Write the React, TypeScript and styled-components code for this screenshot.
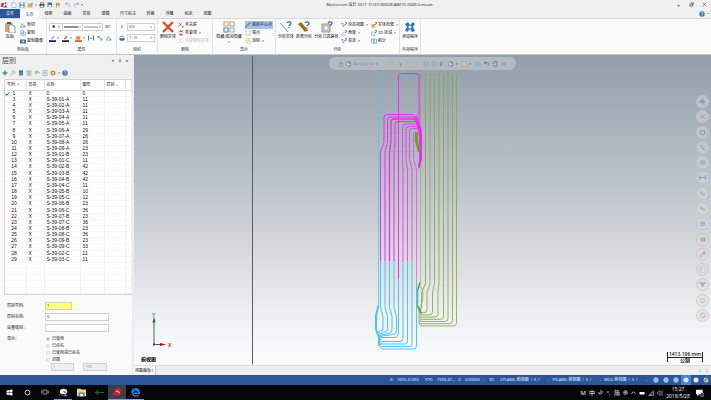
import React from "react";
import styled, { createGlobalStyle, css } from "styled-components";

const Global = createGlobalStyle`
  *, *::before, *::after { box-sizing: border-box; }
  html, body, #root { height: 100%; margin: 0; }
  body { background: #f0f0f0; overflow: hidden; }
  button, input, select { font: inherit; color: inherit; margin: 0; padding: 0; border: 0; background: none; }
`;

const Shell = styled.div`
  height: 100vh;
  display: flex;
  flex-direction: column;
  font-family: "Open Sans", "Noto Sans CJK SC", sans-serif;
  font-size: 4px;
  line-height: 6px;
  color: #111;
  white-space: nowrap;
`;

/* ---------- title bar and tabs ---------- */
const TitleBar = styled.header`
  display: grid;
  grid-template-columns: 1fr auto 1fr;
  align-items: center;
  height: 9px;
  padding-right: 4px;
`;
const QuickBar = styled.div`
  display: flex;
  align-items: center;
  gap: 2px;
  padding-left: 1px;
`;
const Title = styled.h1`
  margin: 0 0 0 52px;
  font-size: 4px;
  line-height: 8px;
  font-weight: 400;
  color: #222;
`;
const WindowButtons = styled.div`
  display: flex;
  justify-content: flex-end;
  gap: 8px;
`;
const IconButton = styled.button`
  display: flex;
  align-items: center;
  justify-content: center;
  flex: none;
`;
const Tabs = styled.nav`
  display: flex;
  align-items: stretch;
  height: 10px;
  padding-right: 1px;
  border-bottom: 1px solid #dadada;
`;
const Tab = styled.button<{ $kind?: "file" | "active" }>`
  min-width: 19px;
  padding: 0 5px;
  line-height: 9px;
  ${(p) => p.$kind === "file" && css`background: #2b579a; color: #fff; width: 20px;`}
  ${(p) => p.$kind === "active" && css`background: #fbfbfb; color: #2b579a; margin-bottom: -1px;`}
`;
const TabsEnd = styled.div`
  margin-left: auto;
  display: flex;
  align-items: center;
  gap: 2px;
`;

/* ---------- ribbon ---------- */
const Ribbon = styled.section`
  display: flex;
  height: 36px;
  background: #fbfbfb;
  border-bottom: 1px solid #c6c8ca;
  flex: none;
`;
const Group = styled.div<{ $w: number }>`
  width: ${(p) => p.$w}px;
  display: flex;
  flex-direction: column;
  border-right: 1px solid #e2e2e2;
`;
const GroupBody = styled.div`
  display: flex;
  flex: 1;
  min-height: 0;
  padding: 2px 0 0 2px;
  gap: 2px;
`;
const GroupLabel = styled.div`
  height: 8px;
  display: flex;
  align-items: center;
  justify-content: center;
  color: #333;
`;
const BigButton = styled.button<{ $w?: number }>`
  width: ${(p) => p.$w ?? 16}px;
  height: 25px;
  display: flex;
  flex-direction: column;
  align-items: center;
  flex: none;
  gap: 1px;
`;
const Column = styled.div`
  display: flex;
  flex-direction: column;
`;
const SmallButton = styled.button<{ $on?: boolean; $off?: boolean }>`
  display: flex;
  align-items: center;
  gap: 1px;
  height: 8px;
  padding: 0 1px 0 0;
  ${(p) => p.$on && css`background: #a9c4e6;`}
  ${(p) => p.$off && css`color: #bbb;`}
`;
const Line = styled.div<{ $gap?: number }>`
  display: flex;
  align-items: center;
  height: 8px;
  margin-top: 2px;
  gap: ${(p) => p.$gap ?? 2}px;
  & + & { margin-top: 3px; }
`;
const Combo = styled.div`
  display: flex;
  align-items: center;
  height: 8px;
  border: 1px solid #d0d0d0;
  background: #fff;
`;
const Cell = styled.button<{ $w: number }>`
  width: ${(p) => p.$w}px;
  height: 6px;
  display: flex;
  align-items: center;
  justify-content: space-evenly;
  & + & { border-left: 1px solid #d0d0d0; }
`;
const Letter = styled.span`
  width: 6px;
  text-align: center;
`;
const SelectBox = styled.label`
  display: flex;
  align-items: center;
  width: 28px;
  height: 8px;
  padding-right: 2px;
  border: 1px solid #d0d0d0;
  background: #fff;
  select { appearance: none; flex: 1; min-width: 0; padding-left: 1px; height: 6px; outline: 0; }
`;
const Caret = () => (
  <svg width="2" height="2" viewBox="0 0 4 4"><path d="M0 1h4L2 3.5z" fill="#555" /></svg>
);

/* ---------- workspace ---------- */
const Work = styled.main`
  flex: 1;
  min-height: 0;
  display: flex;
`;
const Side = styled.aside`
  width: 134px;
  flex: none;
  display: flex;
  flex-direction: column;
  background: #fafafa;
  border-right: 2px solid #ececec;
`;
const SideHead = styled.div`
  display: flex;
  align-items: center;
  height: 12px;
  padding: 0 3px 0 2px;
  background: #f0f0f0;
  h2 { margin: 0 auto 0 0; font-size: 7px; line-height: 12px; font-weight: 400; color: #444; }
  button { margin-left: 3px; }
`;
const SideTools = styled.div`
  display: flex;
  align-items: center;
  gap: 2px;
  height: 12px;
  padding-left: 2px;
  background: #f0f0f0;
`;
const TableBox = styled.div`
  flex: 1;
  min-height: 0;
  margin-left: 4px;
  border: 1px solid #d5d5d5;
  border-width: 1px 0 1px 1px;
  background: #fff;
`;
const LevelTable = styled.table`
  width: 100%;
  height: 100%;
  border-collapse: collapse;
  table-layout: fixed;
  font-family: "Liberation Sans", "Noto Sans CJK SC", sans-serif;
  font-size: 5px;
  line-height: 5px;
  th, td { padding: 0 0 0 2px; text-align: left; border-right: 1px solid #f0f0f0; overflow: hidden; }
  th { height: 10px; font-size: 4px; font-weight: 400; border-bottom: 1px solid #ddd; border-right-color: #e2e2e2; }
  td { border-bottom: 1px solid #f6f6f6; }
  td:first-child { padding: 0; }
`;
const NumberCell = styled.div`
  display: grid;
  grid-template-columns: 5px 8px;
  align-items: center;
  span { grid-column: 2; text-align: center; }
`;
const Form = styled.form`
  flex: none;
  height: 80px;
  padding: 7px 3px 0 7px;
  display: grid;
  grid-template-columns: 38px 1fr;
  grid-template-rows: 11px 11px 11px 1fr;
  > * { align-self: start; line-height: 8px; }
`;
const Field = styled.input<{ $w: number; $yellow?: boolean }>`
  width: ${(p) => p.$w}px;
  height: 8px;
  padding: 0 1px;
  border: 1px solid #cfcfcf;
  background: ${(p) => (p.$yellow ? "#ffff80" : "#fff")};
  &:disabled { background: #efefef; color: #888; }
`;
const Radios = styled.div`
  display: flex;
  flex-direction: column;
`;
const RadioLabel = styled.label`
  display: flex;
  align-items: center;
  gap: 2px;
  height: 7px;
  padding-left: 1px;
  input { appearance: none; width: 4px; height: 4px; border: 1px solid #d8d8d8; border-radius: 50%; background: #fff; }
  input:checked { background: #aaa; }
`;
const Range = styled.div`
  display: flex;
  gap: 9px;
  padding-left: 6px;
`;

const Viewport = styled.section`
  flex: 1;
  min-width: 0;
  display: flex;
  flex-direction: column;
`;
const Canvas = styled.div`
  flex: 1;
  min-height: 0;
  position: relative;
  overflow: hidden;
  background: linear-gradient(#929eaa 0%, #a5aeb8 18%, #bcc2ca 40%, #d5d8dc 62%, #eceef0 82%, #fcfdfd 100%);
`;
const Drawing = styled.svg`
  position: absolute;
  inset: 0;
  width: 100%;
  height: 100%;
`;
const FloatBar = styled.div`
  position: absolute;
  top: 2px;
  left: 195px;
  display: flex;
  align-items: center;
  justify-content: space-between;
  width: 187px;
  height: 13px;
  padding: 0 9px;
  border-radius: 7px;
  background: #b3bac2;
  color: #5f676f;
`;
const Pick = styled.button<{ $on?: boolean }>`
  display: flex;
  align-items: center;
  height: 12px;
  opacity: 0.6;
  ${(p) => p.$on && css`background: #9fc4dc; padding: 0 1px;`}
`;
const Rail = styled.div`
  position: absolute;
  top: 40px;
  right: 2px;
  bottom: 43px;
  display: flex;
  flex-direction: column;
  justify-content: space-between;
`;
const RailButton = styled.button`
  width: 13px;
  height: 13px;
  border: 1px solid rgba(190, 194, 198, 0.7);
  border-radius: 50%;
  background: rgba(220, 222, 225, 0.45);
  display: flex;
  align-items: center;
  justify-content: center;
  svg { opacity: 0.5; }
`;
const ViewName = styled.strong`
  position: absolute;
  left: 7px;
  bottom: 2px;
  font-size: 5px;
  line-height: 7px;
  color: #000;
`;
const Scale = styled.div`
  position: absolute;
  right: 8px;
  bottom: 3px;
  width: 36px;
  height: 10px;
  border: solid #222;
  border-width: 0 1px;
  text-align: center;
  font-size: 5px;
  line-height: 5px;
  font-weight: 600;
  color: #111;
  span { display: block; border-bottom: 1px solid #222; }
`;
const ViewTabs = styled.div`
  height: 10px;
  display: flex;
  align-items: center;
  justify-content: space-between;
  padding-right: 2px;
  background: #eee;
  border-top: 1px solid #ddd;
`;
const ViewTab = styled.button`
  height: 9px;
  padding: 0 2px 0 1px;
  background: #fafafa;
  border-right: 1px solid #ccc;
`;
const Arrows = styled.div`
  display: flex;
  gap: 3px;
`;

/* ---------- bottom bars ---------- */
const Status = styled.footer`
  height: 10px;
  flex: none;
  display: flex;
  align-items: center;
  justify-content: flex-end;
  background: #2b579a;
  color: #f4f7fc;
`;
const StatusText = styled.span<{ $w: number }>`
  width: ${(p) => p.$w}px;
`;
const StatusButton = styled.button<{ $on?: boolean }>`
  width: 10px;
  height: 10px;
  display: flex;
  align-items: center;
  justify-content: center;
  ${(p) => p.$on && css`background: #3f86e0;`}
`;
const Taskbar = styled.footer`
  height: 15px;
  flex: none;
  display: flex;
  align-items: center;
  background: #04070a;
  color: #f2f2f2;
`;
const Task = styled.button<{ $open?: boolean; $on?: boolean }>`
  width: 18px;
  height: 15px;
  display: flex;
  align-items: center;
  justify-content: center;
  border-bottom: 1px solid ${(p) => (p.$open ? "#6fa8dc" : "transparent")};
  ${(p) => p.$on && css`background: #3a3f44;`}
`;
const Tray = styled.div`
  margin-left: auto;
  display: flex;
  align-items: center;
  padding-right: 7px;
  gap: 3px;
  font-size: 6px;
`;
const TrayItem = styled.button`
  min-width: 5px;
  height: 10px;
  display: flex;
  align-items: center;
  justify-content: center;
`;
const Clock = styled.time`
  width: 24px;
  margin-right: 3px;
  text-align: center;
  font-size: 5px;
  line-height: 7px;
`;

/* ---------- icons ---------- */
const art: Record<string, React.ReactNode> = {
  app: <><path d="M1 2h5l-2 8H0zM7 1h5L9 5z" fill="#c8203c" /><path d="M4 11l6-5 2 5z" fill="#555" /></>,
  page: <path d="M2 1h5l3 3v7H2z" fill="#fff" stroke="#5b9bc9" />,
  save: <><path d="M1 1h10v10H1z" fill="#3a78b5" /><path d="M3 1h6v4H3zM3 7h6v4H3z" fill="#fff" /></>,
  folder: <><path d="M1 3h4l1 1h5v7H1z" fill="#e6ad4c" /><path d="M7 4l4-3v4z" fill="#3a78b5" /></>,
  print: <><path d="M1 4h10v5H1z" fill="#444" /><path d="M3 1h6v3H3zM3 7h6v4H3z" fill="#fff" stroke="#555" /></>,
  saveas: <><path d="M1 1h9v9H1z" fill="#3a78b5" /><path d="M3 6h5v4H3z" fill="#fff" /><path d="M6 11l5-6" stroke="#e6ad4c" strokeWidth="2" /></>,
  flag: <><path d="M2 2h8v5H2z" fill="#e6ad4c" /><path d="M3 1v10M8 3v8" stroke="#9a6b22" /></>,
  undo: <path d="M3 1L1 4l4 1M1 4c8-3 11 2 6 6" fill="none" stroke="#7aa7d0" strokeWidth="1.4" />,
  redo: <path d="M9 1l2 3-4 1M11 4C3 1 0 6 5 10" fill="none" stroke="#7aa7d0" strokeWidth="1.4" />,
  turn: <path d="M3 1L1 4l4 1M1 4c8-3 11 2 6 6" fill="none" stroke="#333c44" strokeWidth="1.6" />,
  min: <path d="M3 9h6" stroke="#444" strokeWidth="2" />,
  restore: <path d="M2 5h6v5H2zM5 5V2h6v5H8" fill="none" stroke="#444" strokeWidth="1.5" />,
  close: <path d="M2 2l8 8M10 2l-8 8" stroke="#444" strokeWidth="1.5" />,
  down: <path d="M2 4h8l-4 5z" fill="#555" />,
  up: <path d="M2 8l4-4 4 4" fill="none" stroke="#555" strokeWidth="2" />,
  upw: <path d="M1 9l5-5 5 5" fill="none" stroke="#eee" strokeWidth="1.8" />,
  pin: <path d="M4 1h4v5H4zM2 7h8M6 7v4" fill="none" stroke="#666" strokeWidth="1.3" />,
  help: <><circle cx="6" cy="6" r="5.5" fill="#3f74b5" /><path d="M4 4.500c1-2.500 4-1.500 4 0C8 6 6 6 6 7.500M6 9v1" fill="none" stroke="#fff" strokeWidth="1.300" /></>,
  paste: <><path d="M1 2h8v9H1z" fill="#d9a55b" /><path d="M3 1h4v2H3z" fill="#555" /><path d="M5 4h4l2 2v6H5z" fill="#fff" stroke="#4c8fc0" strokeWidth=".8" /></>,
  cut: <path d="M1 3l10 6M1 9l6-7M1 9h3v2H1zM7 8h3v3H7z" fill="none" stroke="#4c8fc0" />,
  copy: <path d="M1 1h6v7H1zM4 4h7v7H4z" fill="#f4fafe" stroke="#4c8fc0" />,
  camera: <><path d="M0 3h12v8H0z" fill="#556b80" /><circle cx="6" cy="7" r="2.500" fill="#9fd0ee" /></>,
  pen: <><path d="M3 6l5-5 2 3-5 4z" fill="#bbb" /><path d="M0 9h12v3H0z" fill="#14148c" /></>,
  brush: <><path d="M3 6l5-5 2 3-5 4z" fill="#999" /><path d="M0 9h12v3H0z" fill="#222" /></>,
  fill: <><path d="M2 2h7v6H2z" fill="#f7853a" /><path d="M0 9h12v3H0z" fill="#d65a1a" /></>,
  width: <><path d="M1 1v10M11 1v10" stroke="#2f7fb9" strokeWidth="2" /><path d="M3 6h6" stroke="#e0663a" strokeWidth="2" /></>,
  attr: <><path d="M1 2h4v4H1zM7 7h4v4H7z" fill="#5b9bc9" /><path d="M4 5l5 3" stroke="#e6903c" strokeWidth="2" /></>,
  layers: <><path d="M1 3l5-2 5 2-5 2z" fill="#7cb2dd" /><path d="M1 5l5 2 5-2v5l-5 2-5-2z" fill="#2e6ea5" /></>,
  bigx: <path d="M1 1l10 10M11 1L1 11" stroke="#dd4522" strokeWidth="2.200" />,
  redx: <><path d="M1 1l7 8M8 1L1 9" stroke="#dd4522" strokeWidth="1.500" /><path d="M8 8h3v3H8z" fill="#4c8fc0" /></>,
  dup: <><path d="M3 1h6v3H3zM3 8h6v3H3z" fill="#dd4522" /><path d="M1 6h10" stroke="#d77" /></>,
  greyx: <path d="M1 1l7 8M8 1L1 9M8 10h3" stroke="#ccc" strokeWidth="1.500" />,
  four: <g fill="none" strokeWidth="1.200"><path d="M1 1h4v4H1z" stroke="#d9a55b" /><path d="M7 1h4v4H7z" stroke="#bba57b" /><path d="M1 7h4v4H1z" stroke="#4c8fc0" /><path d="M7 7h4v4H7z" stroke="#77bbdd" /></g>,
  arc: <path d="M1 11C3 4 8 3 11 1M2 11L11 2" fill="none" stroke="#345b86" strokeWidth="1.300" />,
  ends: <><path d="M2 2h8v8H2z" fill="none" stroke="#9cc4e4" /><path d="M1 1h2v2H1zM9 1h2v2H9zM1 9h2v2H1zM9 9h2v2H9z" fill="#e6903c" /></>,
  clear: <path d="M1 1h7v7H1zM4 4h7v7H4z" fill="#fffaf0" stroke="#d9b98b" />,
  aline: <><path d="M0 2l8 9" stroke="#5ab09a" strokeWidth="1" /><path d="M7 2c1-2 4-1 4 .500S9 4 9 5M9 6.200v1" stroke="#2e6286" fill="none" strokeWidth="1.300" /></>,
  aruler: <><path d="M0 3l7 8 3-2-7-8z" fill="#a3701f" /><path d="M7 2c1-2 4-1 4 .500S9 4 9 5M9 6.200v1" stroke="#2e6286" fill="none" strokeWidth="1.300" /></>,
  apath: <><path d="M1 3h8v8H1z" fill="#c8d8e6" stroke="#b58a50" /><path d="M3 5h4v4H3z" fill="#fff" stroke="#789" strokeWidth=".600" /><path d="M7 2c1-2 4-1 4 .500S9 4 9 5" stroke="#2e6286" fill="none" strokeWidth="1.300" /></>,
  qview: <><path d="M1 2l4 8 2-5z" fill="none" stroke="#567" /><path d="M8 1h3v3H9v2" stroke="#2e6286" fill="none" strokeWidth="1.300" /></>,
  qangle: <><path d="M7 3l-6 7h8" fill="none" stroke="#4c8fc0" /><path d="M8 1h3v3H9v2" stroke="#2e6286" fill="none" strokeWidth="1.300" /></>,
  qsolid: <><path d="M1 4h7v7H1z" fill="#e0a550" /><path d="M8 1h3v3H9v2" stroke="#2e6286" fill="none" strokeWidth="1.300" /></>,
  q2d: <><path d="M1 4h7v7H1z" fill="#eee" stroke="#899" /><path d="M8 1h3v3H9v2" stroke="#2e6286" fill="none" strokeWidth="1.300" /></>,
  stat: <path d="M1 2h10v8H1zM6 2v8M4 4h4M4 8h4" fill="none" stroke="#3d7899" />,
  gearwheel: <><path d="M1 3l3-2 2 3 3-3 2 2-2 3 2 4-3 1-2-3-3 3-2-2 2-3z" fill="#3677ad" /><circle cx="6" cy="6" r="1.500" fill="#fff" /></>,
  plus: <path d="M6 1v10M1 6h10" stroke="#3b9a6f" strokeWidth="3" />,
  bplus: <path d="M6 1v10M1 6h10" stroke="#3f7fb5" strokeWidth="3" />,
  find: <><circle cx="7" cy="4.500" r="3" fill="none" stroke="#888" /><path d="M5 7l-4 4" stroke="#888" strokeWidth="1.500" /></>,
  stack: <><path d="M2 2h8v9H2z" fill="#4f87c4" /><path d="M2 1h8v1.500H2z" fill="#245" /></>,
  stack2: <path d="M2 2h8v9H2zM1 2h10M5 4v6M7 4v6" fill="#ddd" stroke="#999" />,
  back: <path d="M10 4H4M6 1L2 5l4 3M10 4v3" fill="none" stroke="#4c9a77" strokeWidth="1.600" />,
  sheet: <><path d="M2 1h8v10H2z" fill="#eaf4fb" stroke="#4c8fc0" /><path d="M4 5h4l-2 3z" fill="#3677ad" /></>,
  gear: <circle cx="6" cy="6" r="3.500" fill="none" stroke="#d58a2b" strokeWidth="3" />,
  palegear: <circle cx="6" cy="6" r="3.500" fill="none" stroke="#c9b078" strokeWidth="2.500" />,
  check: <path d="M1 6l3 4 7-7" fill="none" stroke="#138a8a" strokeWidth="2.500" />,
  lock: <><path d="M3 5h7v6H3z" fill="none" stroke="#566" /><path d="M4 5V2h3" fill="none" stroke="#566" /></>,
  cursor: <><path d="M1 1h9v10H1z" fill="#6d757d" /><path d="M3 2l6 6H5L3 11z" fill="#fff" /></>,
  arrow: <path d="M3 1l6 6H6l2 4" fill="none" stroke="#667" strokeWidth="1.500" />,
  bolt: <path d="M1 4h5M8 1v9l3-5z" stroke="#d6bd78" fill="#d6bd78" />,
  cube: <path d="M1 4l5-3 5 3v5l-5 2-5-2z" fill="#c6b99c" stroke="#9dabb6" />,
  cubeb: <path d="M1 4l5-3 5 3v5l-5 2-5-2z" fill="#93b1c8" stroke="#8297a8" />,
  square: <path d="M1 1h10v10H1z" fill="#e3c58e" stroke="#948d80" />,
  half: <><circle cx="6" cy="6" r="5" fill="#4779a5" /><path d="M6 1v10h5V4z" fill="#d5b36a" /></>,
  cycle: <path d="M2 6a4 4 0 018-2M10 6a4 4 0 01-8 2M10 1v3H7" fill="none" stroke="#333c44" strokeWidth="1.600" />,
  slash: <path d="M2 2l8 8M2 9l8-6" stroke="#667" strokeWidth="1.500" />,
  ring: <circle cx="6" cy="6" r="4" fill="none" stroke="#3f7fb5" strokeWidth="1.800" />,
  curve: <path d="M2 2c7 0 1 8 8 8" fill="none" stroke="#3f7fb5" strokeWidth="1.800" />,
  box: <path d="M2 3h8v7H2zM2 6h8M6 3v7" fill="#a9c5da" stroke="#3f7fb5" />,
  dim: <path d="M1 2v8M11 2v8M1 6h10" stroke="#3f7fb5" strokeWidth="2" />,
  tools: <path d="M1 3l4-1 2 3 4 2-2 4-3-3-4-1z" fill="#b49b5d" />,
  brown: <><path d="M2 3l6-1v8H2z" fill="#c8914a" /><path d="M8 2l3 1v6l-3 1z" fill="#8a6a3a" /></>,
  purple: <><path d="M6 1h5v5H6z" fill="#9a63b8" /><path d="M1 6h5v5H1z" fill="#d6ad68" /></>,
  panel: <><path d="M2 1h8v10H2z" fill="#e8edf0" stroke="#9ab" /><path d="M2 1h3v10H2z" fill="#d6bd78" /></>,
  colors: <><path d="M1 2h3v3H1z" fill="#c55" /><path d="M4 2h4v3H4z" fill="#4a8" /><path d="M8 2h3v3H8z" fill="#47a" /><path d="M3 5h6l-3 6z" fill="#956" /></>,
  ban: <><circle cx="6" cy="6" r="4.500" fill="none" stroke="#e05a5a" strokeWidth="1.500" /><path d="M3 3l6 6" stroke="#e05a5a" strokeWidth="1.500" /></>,
  left: <path d="M8 2L4 6l4 4" fill="none" stroke="#777" strokeWidth="1.500" />,
  right: <path d="M4 2l4 4-4 4" fill="none" stroke="#777" strokeWidth="1.500" />,
  globe: <><circle cx="6" cy="6" r="4.500" fill="#5f8cc8" stroke="#dce8f7" strokeWidth="1.500" /><path d="M2 6h8M6 2v8" stroke="#eef" /></>,
  cog: <><circle cx="6" cy="6" r="4.500" fill="none" stroke="#eee" strokeWidth="1.500" /><path d="M2 6h8M6 2v8" stroke="#eee" /></>,
  ball: <circle cx="6" cy="6" r="5" fill="#e7e3dc" />,
  ball2: <><circle cx="6" cy="6" r="5" fill="#c9c3b6" /><path d="M2 9l7-7" stroke="#456" strokeWidth="2" /></>,
  win: <path d="M1 2.500l4-.600v3.800H1zM5.700 1.800L11 1v4.700H5.700zM1 6.400h4v3.800l-4-.600zM5.700 6.400H11V11l-5.300-.800z" fill="#fff" />,
  circle: <circle cx="6" cy="6" r="4.200" fill="none" stroke="#fff" strokeWidth="1.400" />,
  taskview: <path d="M3 3h6v6H3zM1 4v4M11 4v4" fill="none" stroke="#ccc" />,
  snip: <><ellipse cx="6" cy="4.500" rx="5" ry="3.500" fill="#eee" /><path d="M5 4l5 1-2 2z" fill="#c33" /><path d="M1 8l9 3" stroke="#b33" strokeWidth="1.500" /><path d="M7 8h3v3H7z" fill="#4a80c0" /></>,
  files: <><path d="M0 1h5l1 1h6v9H0z" fill="#f6d66f" /><path d="M2 6h8v5H2z" fill="#3d91c9" /><path d="M4 8h4v3H4z" fill="#fff" /></>,
  green: <path d="M0 6h12M5 3L1 6l4 3" fill="none" stroke="#11651f" strokeWidth="1.500" />,
  mcam: <><path d="M3 1h8L9 10H6L5 6 4 10H0z" fill="#e8183f" /><path d="M4 4l5 2" stroke="#fff" /></>,
  edge: <path d="M10.500 9.500C4 13 1 8 3 5c2-4 8-2 8 2H4M1 6C2-1 12-1 11 7" fill="none" stroke="#1688e8" strokeWidth="1.800" />,
  moon: <path d="M7 1c1 4-2 7-6 6 3 5 10 2 9-3z" fill="none" stroke="#fff" strokeWidth="1.500" />,
  battery: <><path d="M1 4h9v5H1z" fill="#fff" /><path d="M10 5h2v3h-2z" fill="#ccc" /></>,
  wifi: <path d="M1 11L11 2v9zM5 7v4M8 5v6" fill="none" stroke="#bbb" strokeWidth="1.200" />,
  sound: <path d="M1 4h2l3-3v10L3 8H1zM8 3c2 2 2 4 0 6M10 1c3 3 3 7 0 10" fill="none" stroke="#ddd" />,
  note: <><path d="M0 1h10v7H5l-3 3V8H0z" fill="#fff" /><circle cx="9" cy="8.500" r="3" fill="#333" stroke="#ddd" strokeWidth=".700" /></>,
  launch: <path d="M2 2h3M2 2v3M5 5l5 5M10 6v4H6" fill="none" stroke="#777" />,
};
const Icon = ({ n, s = 6 }: { n: string; s?: number }) => (
  <svg width={s} height={s} viewBox="0 0 12 12" aria-hidden="true">{art[n]}</svg>
);

type Item = [icon: string, text: string, menu?: boolean, state?: "on" | "off"];
const Buttons = ({ items }: { items: Item[] }) => (
  <Column>
    {items.map(([icon, text, menu, state]) => (
      <SmallButton key={text} $on={state === "on"} $off={state === "off"} disabled={state === "off"}>
        <Icon n={icon} />
        {text}
        {menu && <>&nbsp;<Caret /></>}
      </SmallButton>
    ))}
  </Column>
);

/* ---------- data ---------- */
const tabs = ["文件", "主页", "线框", "曲面", "实体", "建模", "尺寸标注", "转换", "浮雕", "机床", "视图"];
const levels: [number, string, number][] = [
  [1, "0", 0], [3, "S-39-01-A", 11], [4, "S-39-02-A", 11], [5, "S-39-03-A", 11], [6, "S-39-04-A", 11],
  [7, "S-39-05-A", 11], [8, "S-39-06-A", 29], [9, "S-39-07-A", 26], [10, "S-39-08-A", 26], [11, "S-39-09-A", 23],
  [12, "S-39-01-B", 23], [13, "S-39-01-C", 11], [14, "S-39-02-B", 42], [15, "S-39-03-B", 42], [16, "S-39-04-B", 42],
  [17, "S-39-04-C", 11], [18, "S-39-05-B", 10], [19, "S-39-05-C", 12], [20, "S-39-06-B", 23], [21, "S-39-06-C", 36],
  [22, "S-39-07-B", 23], [23, "S-39-07-C", 36], [24, "S-39-08-B", 23], [25, "S-39-08-C", 36], [26, "S-39-09-B", 23],
  [27, "S-39-09-C", 33], [28, "S-39-02-C", 11], [29, "S-39-03-C", 11],
];
const rail = ["bplus", "slash", "ring", "curve", "box", "dim", "tools", "tools", "box", "brown", "purple", "panel", "colors", "palegear", "ban"];

/* ---------- wire drawing ---------- */
const MAGENTA = "#f02cf0";
const CYAN = "#4cc4f2";
const GREEN = "#86a846";
const outer = [[384, 380.5, 115], [387.5, 385, 117.5], [391, 389.5, 119.5], [395, 394, 122]];
const inner = [[402.5, 403, 124.5], [406, 407.5, 127], [409.5, 412, 129], [413.5, 416.5, 132.5]];
const greens = [425.5, 430, 434.5, 439, 443.5, 448, 452.5, 456.5];

const Wires = () => (
  <Drawing viewBox="134 56 577 309" fill="none" strokeWidth="1" aria-label="线框图">
    <path d="M252.500 56V365" stroke="#555c63" />
    <path d="M378.500 72V309" stroke={CYAN} strokeOpacity=".8" />
    <g stroke={GREEN} strokeOpacity=".85">
      <path d="M420.500 74V284" strokeOpacity=".5" />
      {greens.map((x, i) => {
        const bottom = 311 + i * 2.2;
        const bend = i < 4 ? 4 - i : 0;
        return (
          <path
            key={x}
            d={`M${x} 74V284L${x - bend} 293V${bottom - 3}q0 3-3 3H421L418.500 ${bottom - 4}`}
          />
        );
      })}
    </g>
    <path d="M420 283l-2.500 8v15l4 8" stroke="#6e9630" strokeWidth="1.500" />
    <path d="M420 286c5 6 3 16 0 22" stroke={GREEN} strokeWidth=".8" />
    <g stroke={MAGENTA}>
      <path d="M398.500 280V77q0-3 3-3h14.500q3 0 3 3V136" />
      {outer.map(([a, b, t], i) => (
        <path key={a} strokeWidth={i === 2 ? 1.3 : 1} d={`M${b} 262V152L${a} 143V${t + 3}q0-3 3-3H${412 + i}q3 0 3.500 5L420 133V158L419 168`} />
      ))}
      {inner.map(([a, b, t], i) => (
        <path key={a} strokeOpacity={i === 3 ? 0.6 : 0.8} d={`M${b} ${i === 3 ? 279 : 262}V170L${a} 160V${t + 3}q0-3 3-3H417L421 134V160l-2 6`} />
      ))}
    </g>
    <path d="M416 116l5 14v30l-2 8M418 122l3 12" stroke="#ff19ff" strokeWidth="1.300" />
    <path d="M416.500 133V142L419.500 152" stroke="#789a2a" strokeWidth="3" />
    <path d="M384 133H414M380 152H424M398 170H424" stroke={MAGENTA} strokeOpacity=".4" strokeDasharray="2 3" strokeWidth=".6" />
    <g stroke={CYAN}>
      {outer.map(([, b], i) => (
        <path key={b} d={`M${b} 262V308L${b + 2.5} 317V${328 + i}q0 4-4 4L379 ${334 + i}`} />
      ))}
      <path d="M398.500 280V332q0 6-4 6H380" />
      {[403, 407.5, 412, 416.5].map((x, i) => (
        <path key={x} d={`M${x} ${i === 3 ? 279 : 262}V${339 + i * 2.5}q0 3-3 3H382l-3-4`} />
      ))}
      <path d="M378.500 306l-2.500 10v14l3 8v8" strokeWidth="2" />
      <path d="M417 288v20" strokeWidth="1.500" />
    </g>
    <path d="M154 345V321" stroke="#2c7a4a" />
    <path d="M152.500 323l1.500-6 1.500 6z" fill="#176b3a" />
    <path d="M154 345H163" stroke="#b03a3a" />
    <path d="M160 343.500l6 1.500-6 1.500z" fill="#a11" />
    <path d="M153 344h2v2h-2z" fill="#347" />
    <g fontSize="5" fontWeight="700" fontFamily="Liberation Sans, sans-serif">
      <text x="152" y="317" fill="#15a33a">Y</text>
      <text x="168" y="347" fill="#e11">X</text>
    </g>
  </Drawing>
);

export default function App() {
  return (
    <Shell>
      <Global />
      <TitleBar>
        <QuickBar>
          <Icon n="app" />
          <span />
          {["page", "save", "folder"].map((n) => <IconButton key={n} aria-label={n}><Icon n={n} /></IconButton>)}
          <Caret />
          {["print", "saveas", "flag"].map((n) => <IconButton key={n} aria-label={n}><Icon n={n} /></IconButton>)}
          <span />
          {["undo", "redo"].map((n) => <IconButton key={n} aria-label={n}><Icon n={n} /></IconButton>)}
          <Caret />
        </QuickBar>
        <Title>Mastercam 设计 2017&nbsp; D:\20180528\AB015-0349-0.mcam</Title>
        <WindowButtons>
          {["min", "restore", "close"].map((n) => <IconButton key={n} aria-label={n}><Icon n={n} s={5} /></IconButton>)}
        </WindowButtons>
      </TitleBar>
      <Tabs>
        {tabs.map((t, i) => (
          <Tab key={t} $kind={i === 0 ? "file" : i === 1 ? "active" : undefined}>{t}</Tab>
        ))}
        <TabsEnd>
          <IconButton aria-label="help"><Icon n="help" /></IconButton>
          <IconButton aria-label="collapse"><Icon n="up" s={3} /></IconButton>
        </TabsEnd>
      </Tabs>

      <Ribbon>
        <Group $w={47}>
          <GroupBody>
            <BigButton><Icon n="paste" s={12} />粘贴</BigButton>
            <Buttons items={[["cut", "剪切"], ["copy", "复制"], ["camera", "复制图像"]]} />
          </GroupBody>
          <GroupLabel>剪贴板</GroupLabel>
        </Group>
        <Group $w={70}>
          <GroupBody>
            <Column>
              <Line>
                <Combo>
                  <Cell $w={12} aria-label="点型">✱<Caret /></Cell>
                  <Cell $w={20} aria-label="线型"><svg width="14" height="2"><path d="M0 1h14" stroke="#222" /></svg><Caret /></Cell>
                  <Cell $w={20} aria-label="线宽"><svg width="14" height="2"><path d="M0 1h14" stroke="#888" /></svg><Caret /></Cell>
                </Combo>
                3D
              </Line>
              <Line $gap={3}>
                {["pen", "brush", "fill"].map((n) => (
                  <IconButton key={n} aria-label={n}><Icon n={n} s={7} />&nbsp;<Caret /></IconButton>
                ))}
                {["width", "attr", "cut"].map((n) => <IconButton key={n} aria-label={n}><Icon n={n} /></IconButton>)}
              </Line>
            </Column>
          </GroupBody>
          <GroupLabel>属性</GroupLabel>
        </Group>
        <Group $w={41}>
          <GroupBody>
            <Column>
              <Line>
                <Letter>Z</Letter>
                <SelectBox><select aria-label="Z" defaultValue="0.0"><option>0.0</option></select><Caret /></SelectBox>
              </Line>
              <Line>
                <Icon n="layers" />
                <SelectBox><select aria-label="层别" defaultValue="1 : 0"><option>1 : 0</option></select><Caret /></SelectBox>
              </Line>
            </Column>
          </GroupBody>
          <GroupLabel>组织</GroupLabel>
        </Group>
        <Group $w={55}>
          <GroupBody>
            <BigButton><Icon n="bigx" s={12} />删除实体</BigButton>
            <Buttons items={[["redx", "非关联"], ["dup", "重复项", true], ["greyx", "恢复删除实体", false, "off"]]} />
          </GroupBody>
          <GroupLabel>删除</GroupLabel>
        </Group>
        <Group $w={63}>
          <GroupBody>
            <BigButton $w={28}><Icon n="four" s={12} />隐藏/取消隐藏<Caret /></BigButton>
            <Buttons items={[["arc", "弧的中心点", false, "on"], ["ends", "端点"], ["clear", "消除", true]]} />
          </GroupBody>
          <GroupLabel>显示</GroupLabel>
        </Group>
        <Group $w={124}>
          <GroupBody>
            <BigButton><Icon n="aline" s={12} />分析实体</BigButton>
            <BigButton><Icon n="aruler" s={12} />距离分析</BigButton>
            <BigButton $w={25}><Icon n="apath" s={12} />分析刀具路径</BigButton>
            <Buttons items={[["qview", "动态视图", true], ["qangle", "角度", true], ["qview", "串连", true]]} />
            <Buttons items={[["qsolid", "实体检查", true], ["q2d", "2D 区域", true], ["stat", "统计"]]} />
          </GroupBody>
          <GroupLabel>分析</GroupLabel>
        </Group>
        <Group $w={21}>
          <GroupBody>
            <BigButton><Icon n="gearwheel" s={12} />添加程序</BigButton>
          </GroupBody>
          <GroupLabel>外接程序</GroupLabel>
        </Group>
      </Ribbon>

      <Work>
        <Side>
          <SideHead>
            <h2>层别</h2>
            {["down", "pin", "close"].map((n) => <IconButton key={n} aria-label={n}><Icon n={n} s={4} /></IconButton>)}
          </SideHead>
          <SideTools>
            {["plus", "find", "stack", "stack2", "back", "sheet", "gear"].map((n) => (
              <IconButton key={n} aria-label={n}><Icon n={n} /></IconButton>
            ))}
            <Caret />
            <IconButton aria-label="help"><Icon n="help" /></IconButton>
          </SideTools>
          <TableBox>
            <LevelTable>
              <colgroup>
                <col width="21" /><col width="18" /><col width="36" /><col width="24" /><col width="21" /><col />
              </colgroup>
              <thead>
                <tr><th>号码 &nbsp;^</th><th>高亮</th><th>名称</th><th>图形</th><th>层别 ...</th><th /></tr>
              </thead>
              <tbody>
                {levels.map(([n, name, count]) => (
                  <tr key={n}>
                    <td><NumberCell>{n === 1 && <Icon n="check" s={5} />}<span>{n}</span></NumberCell></td>
                    <td>X</td><td>{name}</td><td>{count}</td><td /><td />
                  </tr>
                ))}
                {[1, 2, 3, 4, 5].map((n) => (
                  <tr key={"e" + n}><td>&nbsp;</td><td /><td /><td /><td /><td /></tr>
                ))}
              </tbody>
            </LevelTable>
          </TableBox>
          <Form>
            <label htmlFor="num">层别号码:</label>
            <Field id="num" $w={27} $yellow defaultValue="1" />
            <label htmlFor="name">层别名称:</label>
            <Field id="name" $w={64} defaultValue="0" />
            <label htmlFor="set">设置级别：</label>
            <Field id="set" $w={64} />
            <span>显示：</span>
            <Radios>
              {["已使用", "已命名", "已使用或已命名", "范围"].map((t, i) => (
                <RadioLabel key={t}><input type="radio" name="show" defaultChecked={i === 0} />{t}</RadioLabel>
              ))}
              <Range>
                <Field $w={23} disabled defaultValue="1" aria-label="范围起" />
                <Field $w={24} disabled defaultValue="100" aria-label="范围止" />
              </Range>
            </Radios>
          </Form>
        </Side>

        <Viewport>
          <Canvas>
            <Wires />
            <FloatBar>
              <Pick aria-label="lock"><Icon n="lock" /></Pick>
              <Pick><Icon n="cursor" />&nbsp;AutoCursor&nbsp;<Caret /></Pick>
              {["bolt", "palegear", "arrow", "cube", "cube", "cubeb", "cubeb", "half", "cursor"].map((n, i) => (
                <Pick key={i} aria-label={n}><Icon n={n} /></Pick>
              ))}
              <Caret />
              <Pick aria-label="square"><Icon n="square" /></Pick>
              <Caret />
              <Pick $on aria-label="select"><Icon n="cubeb" /></Pick>
              {["turn", "cycle", "slash"].map((n) => <Pick key={n} aria-label={n}><Icon n={n} /></Pick>)}
            </FloatBar>
            <Rail>
              {rail.map((n, i) => <RailButton key={i} aria-label={n}><Icon n={n} s={7} /></RailButton>)}
            </Rail>
            <ViewName>俯视图</ViewName>
            <Scale><span>1413.196 mm</span>公制</Scale>
          </Canvas>
          <ViewTabs>
            <ViewTab>视图面板1</ViewTab>
            <Arrows>
              {["left", "right"].map((n) => <IconButton key={n} aria-label={n}><Icon n={n} s={4} /></IconButton>)}
            </Arrows>
          </ViewTabs>
        </Viewport>
      </Work>

      <Status>
        <StatusText $w={7}>X:</StatusText>
        <StatusText $w={28}>1655.21263</StatusText>
        <StatusText $w={12}>Y(Y):</StatusText>
        <StatusText $w={21}>7233.47...</StatusText>
        <StatusText $w={7}>Z:</StatusText>
        <StatusText $w={18}>0.00000</StatusText>
        <StatusText $w={6}>-</StatusText>
        <StatusText $w={11}>3D</StatusText>
        <StatusText $w={48}>CPLANE: 俯视图 &nbsp;! &nbsp;S &nbsp;!</StatusText>
        <StatusText $w={4}>-</StatusText>
        <StatusText $w={48}>TPLANE: 俯视图 &nbsp;! &nbsp;S &nbsp;!</StatusText>
        <StatusText $w={4}>-</StatusText>
        <StatusText $w={42}>WCS: 俯视图 &nbsp;! &nbsp;S &nbsp;!</StatusText>
        <StatusText $w={5}>-</StatusText>
        {["globe", "globe", "globe", "ball", "ball", "ball2"].map((n, i) => (
          <StatusButton key={i} $on={i === 3} aria-label={n}><Icon n={n} /></StatusButton>
        ))}
      </Status>
      <Taskbar>
        <Task aria-label="start"><Icon n="win" s={7} /></Task>
        <Task aria-label="search"><Icon n="circle" s={7} /></Task>
        <Task aria-label="tasks"><Icon n="taskview" s={8} /></Task>
        <Task aria-label="snip" $open><Icon n="snip" s={9} /></Task>
        <Task aria-label="files"><Icon n="files" s={9} /></Task>
        <Task aria-label="tool"><Icon n="green" s={9} /></Task>
        <Task aria-label="Mastercam" $open $on><Icon n="mcam" s={9} /></Task>
        <Task aria-label="Edge" $open><Icon n="edge" s={9} /></Task>
        <Tray>
          <TrayItem>M</TrayItem>
          <TrayItem>中</TrayItem>
          <TrayItem aria-label="moon"><Icon n="moon" s={5} /></TrayItem>
          <TrayItem>°,</TrayItem>
          <TrayItem>简</TrayItem>
          <TrayItem aria-label="settings"><Icon n="cog" s={5} /></TrayItem>
          <TrayItem aria-label="more"><Icon n="upw" s={5} /></TrayItem>
          <TrayItem aria-label="battery"><Icon n="battery" s={6} /></TrayItem>
          <TrayItem aria-label="network"><Icon n="wifi" s={6} /></TrayItem>
          <TrayItem aria-label="volume"><Icon n="sound" s={6} /></TrayItem>
          <Clock>15:27<br />2018/5/28</Clock>
          <TrayItem aria-label="notifications"><Icon n="note" s={8} /></TrayItem>
        </Tray>
      </Taskbar>
    </Shell>
  );
}
